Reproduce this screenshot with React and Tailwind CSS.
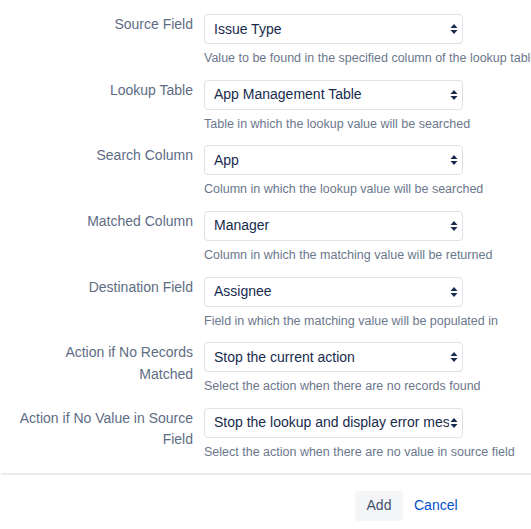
import React from 'react';

const fields = [
  { label: 'Source Field', value: 'Issue Type', help: 'Value to be found in the specified column of the lookup table' },
  { label: 'Lookup Table', value: 'App Management Table', help: 'Table in which the lookup value will be searched' },
  { label: 'Search Column', value: 'App', help: 'Column in which the lookup value will be searched' },
  { label: 'Matched Column', value: 'Manager', help: 'Column in which the matching value will be returned' },
  { label: 'Destination Field', value: 'Assignee', help: 'Field in which the matching value will be populated in' },
  { label: 'Action if No Records Matched', value: 'Stop the current action', help: 'Select the action when there are no records found' },
  { label: 'Action if No Value in Source Field', value: 'Stop the lookup and display error message', help: 'Select the action when there are no value in source field' },
];

// Up/down arrows used by the mac-style select
function SelectArrows() {
  return (
    <svg width="8" height="12" viewBox="0 0 8 12" className="shrink-0">
      <path d="M4 1 L7.5 5 L0.5 5 Z" fill="#172b4d" />
      <path d="M4 11 L7.5 7 L0.5 7 Z" fill="#172b4d" />
    </svg>
  );
}

function FieldRow({ label, value, help }) {
  return (
    <div className="flex">
      <label className="w-[194px] shrink-0 pr-[1px] pl-[16px] text-right text-[14px] leading-[21.5px] text-[#5e6c84]">
        {label}
      </label>
      <div className="ml-[10px] flex flex-col">
        <div className="flex h-[30px] w-[259px] items-center rounded-[4px] border border-[#dfe1e6] bg-white pl-[9px] pr-[4px]">
          <span className="flex-1 overflow-hidden whitespace-nowrap text-[14px] text-[#172b4d]">{value}</span>
          <span className="bg-white pl-[1px]"><SelectArrows /></span>
        </div>
        <p className="mt-[6px] whitespace-nowrap text-[12.5px] leading-[16px] text-[#6b778c]">{help}</p>
      </div>
    </div>
  );
}

export default function App() {
  return (
    <div className="h-[529px] w-[531px] overflow-hidden bg-white font-['Liberation_Sans',Arial,sans-serif]">
      <div className="flex flex-col gap-[13.67px] pt-[14px]">
        {fields.map((f) => (
          <FieldRow key={f.label} {...f} />
        ))}
      </div>
      <div className="mt-[13px] ml-[1px] border-t-2 border-[#ebecf0]" />
      <div className="flex items-center pt-[16px] pl-[355px]">
        <button type="button" className="h-[30px] w-[48px] rounded-[3px] bg-[#f4f5f7] text-[14px] text-[#42526e]">
          Add
        </button>
        <button type="button" className="ml-[11px] text-[14px] text-[#0052cc]">
          Cancel
        </button>
      </div>
    </div>
  );
}
